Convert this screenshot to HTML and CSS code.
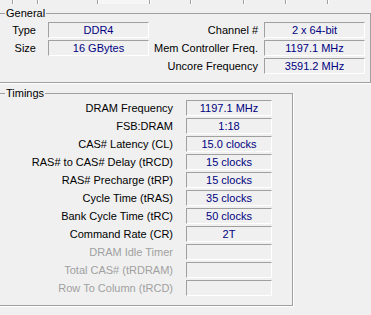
FILE: index.html
```html
<!DOCTYPE html>
<html lang="en">
  <head>
    <meta charset="UTF-8" />
    <title>Memory</title>
    <link rel="stylesheet" href="styles.css">
  </head>
  <body>
    <!-- bottom edge of the tab strip -->
    <div class="tabs">
      <span class="tab"></span>
      <span class="tab"></span>
      <span class="tab"></span>
      <span class="tab active"></span>
      <span class="tab"></span>
      <span class="tab"></span>
      <span class="tab"></span>
      <span class="tab"></span>
      <span class="tab last"></span>
    </div>

    <!-- GENERAL -->
    <fieldset class="group general">
      <legend>General</legend>
      <div class="general-grid">
        <span class="label first">Type</span>
        <span class="field">DDR4</span>
        <span class="label">Channel #</span>
        <span class="field">2 x 64-bit</span>

        <span class="label first">Size</span>
        <span class="field">16 GBytes</span>
        <span class="label">Mem Controller Freq.</span>
        <span class="field">1197.1 MHz</span>

        <span class="label first"></span>
        <span class="spacer"></span>
        <span class="label">Uncore Frequency</span>
        <span class="field">3591.2 MHz</span>
      </div>
    </fieldset>

    <!-- TIMINGS -->
    <fieldset class="group timings">
      <legend>Timings</legend>
      <div class="timings-grid">
        <span class="label">DRAM Frequency</span>
        <span class="field">1197.1 MHz</span>
        <span class="label">FSB:DRAM</span>
        <span class="field">1:18</span>
        <span class="label">CAS# Latency (CL)</span>
        <span class="field">15.0 clocks</span>
        <span class="label">RAS# to CAS# Delay (tRCD)</span>
        <span class="field">15 clocks</span>
        <span class="label">RAS# Precharge (tRP)</span>
        <span class="field">15 clocks</span>
        <span class="label">Cycle Time (tRAS)</span>
        <span class="field">35 clocks</span>
        <span class="label">Bank Cycle Time (tRC)</span>
        <span class="field">50 clocks</span>
        <span class="label">Command Rate (CR)</span>
        <span class="field">2T</span>
        <span class="label disabled">DRAM Idle Timer</span>
        <span class="field"></span>
        <span class="label disabled">Total CAS# (tRDRAM)</span>
        <span class="field"></span>
        <span class="label disabled">Row To Column (tRCD)</span>
        <span class="field"></span>
      </div>
    </fieldset>
  </body>
</html>
```

FILE: styles.css
```css
* {
  box-sizing: border-box;
}

body {
  margin: 0;
  height: 315px;
  overflow: hidden;
  background-color: #f0f0f0;
  color: #000;
  font-family: "Liberation Sans", Arial, sans-serif;
  font-size: 11px;
}

/* tab strip, only its lower edge is visible */
.tabs {
  display: grid;
  grid-template-columns: 13px 25px 60px 52px 41px 53px 42px 42px 1fr;
  height: 4px;
}

.tab {
  border-right: 1px solid #a0a0a0;
  border-left: 1px solid #fff;
}

.tab:first-child {
  border-left: none;
}

.tab.last {
  border-right: none;
}

.tab.active {
  background-color: #f6f6f6;
}

/* group boxes */
.group {
  margin: 0 0 0 -2px;
  padding: 0;
  border: 1px solid #a0a0a0;
  box-shadow: 1px 1px 0 #fff;
  min-width: 0;
}

.group legend {
  margin-left: 6px;
  padding: 0 1px;
  height: 14px;
  line-height: 14px;
  color: #000;
}

.general {
  margin-top: 2px;
  width: 373px;
  padding: 2px 5px 8px 0;
}

.timings {
  margin-top: 3px;
  width: 295px;
  padding: 0 20px 9px 0;
}

.general-grid {
  display: grid;
  grid-template-columns: 49px 101px 1fr 101px;
  grid-auto-rows: 16px;
  row-gap: 2px;
}

.timings-grid {
  display: grid;
  grid-template-columns: 187px 86px;
  grid-auto-rows: 16px;
  row-gap: 2px;
}

.label {
  text-align: right;
  line-height: 16px;
  padding-right: 6px;
  white-space: nowrap;
}

.general-grid .label.first {
  padding-right: 12px;
}

.timings-grid .label {
  padding-right: 13px;
}

.label.disabled {
  color: #a0a0a0;
}

/* sunken read-only boxes */
.field {
  border-top: 1px solid #a0a0a0;
  border-left: 1px solid #a0a0a0;
  border-right: 1px solid #fff;
  border-bottom: 1px solid #fff;
  color: #000080;
  text-align: center;
  line-height: 14px;
  white-space: nowrap;
}
```
